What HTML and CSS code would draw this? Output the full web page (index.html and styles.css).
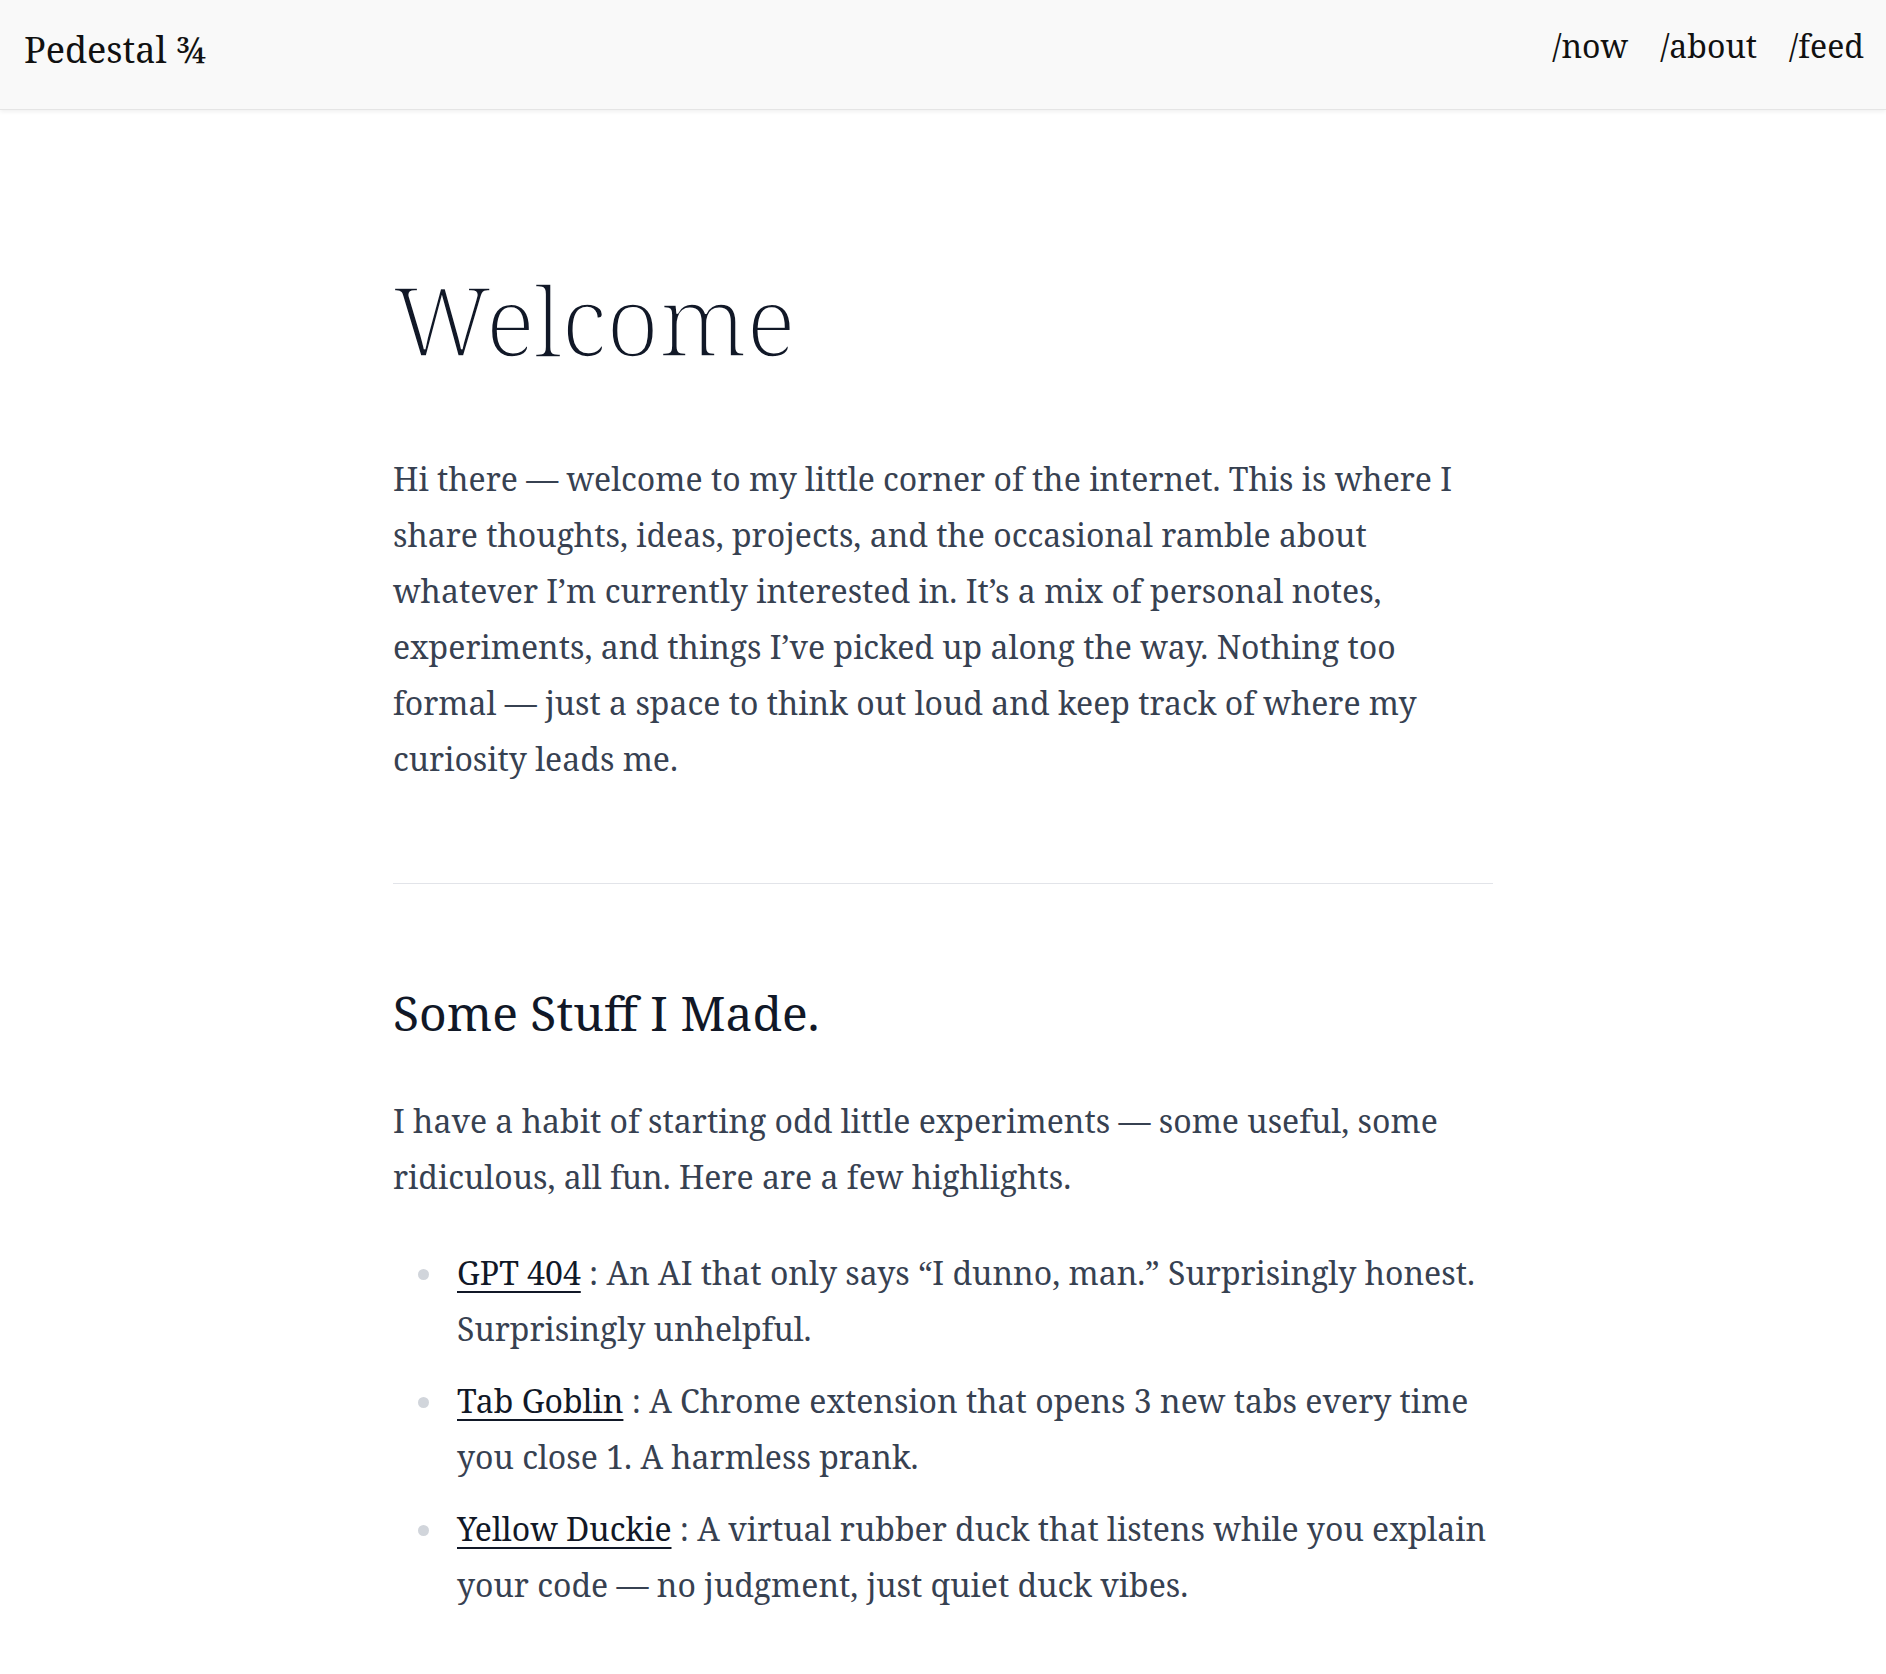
FILE: index.html
```html
<!DOCTYPE html>
<html lang="en">
<head>
<meta charset="utf-8">
<title>Pedestal ¾</title>
<link rel="stylesheet" href="styles.css">
</head>
<body>
<header class="site-header">
  <a class="brand" href="#">Pedestal ¾</a>
  <nav class="nav">
    <a href="#">/now</a>
    <a href="#">/about</a>
    <a href="#">/feed</a>
  </nav>
</header>
<main class="content">
  <h1 class="title">Welcome</h1>
  <p class="lead">Hi there — welcome to my little corner of the internet. This is where I share thoughts, ideas, projects, and the occasional ramble about whatever I’m currently interested in. It’s a mix of personal notes, experiments, and things I’ve picked up along the way. Nothing too formal — just a space to think out loud and keep track of where my curiosity leads me.</p>
  <hr class="rule">
  <h2 class="section-title">Some Stuff I Made.</h2>
  <p class="text">I have a habit of starting odd little experiments — some useful, some ridiculous, all fun. Here are a few highlights.</p>
  <ul class="projects">
    <li><a href="#">GPT 404</a> : An AI that only says “I dunno, man.” Surprisingly honest. Surprisingly unhelpful.</li>
    <li><a href="#">Tab Goblin</a> : A Chrome extension that opens 3 new tabs every time you close 1. A harmless prank.</li>
    <li><a href="#">Yellow Duckie</a> : A virtual rubber duck that listens while you explain your code — no judgment, just quiet duck vibes.</li>
  </ul>
</main>
</body>
</html>
```
FILE: styles.css
```css
* { box-sizing: border-box; }
html, body { margin: 0; padding: 0; }
body {
  background: #ffffff;
  font-family: "Noto Serif", "DejaVu Serif", serif;
  color: #374151;
}
.site-header {
  height: 110px;
  background: #f9f9f9;
  border-bottom: 1px solid #e5e5e5;
  box-shadow: 0 2px 4px rgba(0,0,0,0.06);
  display: flex;
  align-items: flex-start;
  justify-content: space-between;
  padding: 0 22px 0 24px;
}
.brand {
  color: #111;
  text-decoration: none;
  font-size: 36px;
  line-height: 1;
  margin-top: 32px;
}
.nav {
  display: flex;
  gap: 32px;
  margin-top: 30px;
}
.nav a {
  color: #111;
  text-decoration: none;
  font-size: 32px;
  line-height: 1;
}
.content {
  max-width: 1100px;
  margin: 0 auto;
  padding-top: 157px;
  padding-bottom: 60px;
}
.title {
  font-family: "Noto Serif", serif;
  font-size: 95px;
  font-weight: 300;
  color: #111827;
  -webkit-text-stroke: 1.6px #ffffff;
  line-height: 1.1;
  margin: 0 0 79px;
}
.lead, .text {
  font-size: 32px;
  line-height: 56px;
  margin: 0;
}
.rule {
  border: 0;
  border-top: 1px solid #e2e4e9;
  margin: 96px 0 100px;
}
.section-title {
  font-size: 48px;
  font-weight: 400;
  color: #111827;
  line-height: 1.2;
  margin: 0 0 52px;
}
.projects {
  list-style: none;
  margin: 40px 0 0;
  padding-left: 64px;
  font-size: 32px;
  line-height: 56px;
}
.projects li {
  position: relative;
  margin-bottom: 16px;
}
.projects li::before {
  content: "";
  position: absolute;
  left: -39px;
  top: 24px;
  width: 11px;
  height: 11px;
  border-radius: 50%;
  background: #d1d5db;
}
.projects a {
  color: #111827;
  text-decoration: underline;
  text-decoration-thickness: 2px;
  text-underline-offset: 6px;
}
```
